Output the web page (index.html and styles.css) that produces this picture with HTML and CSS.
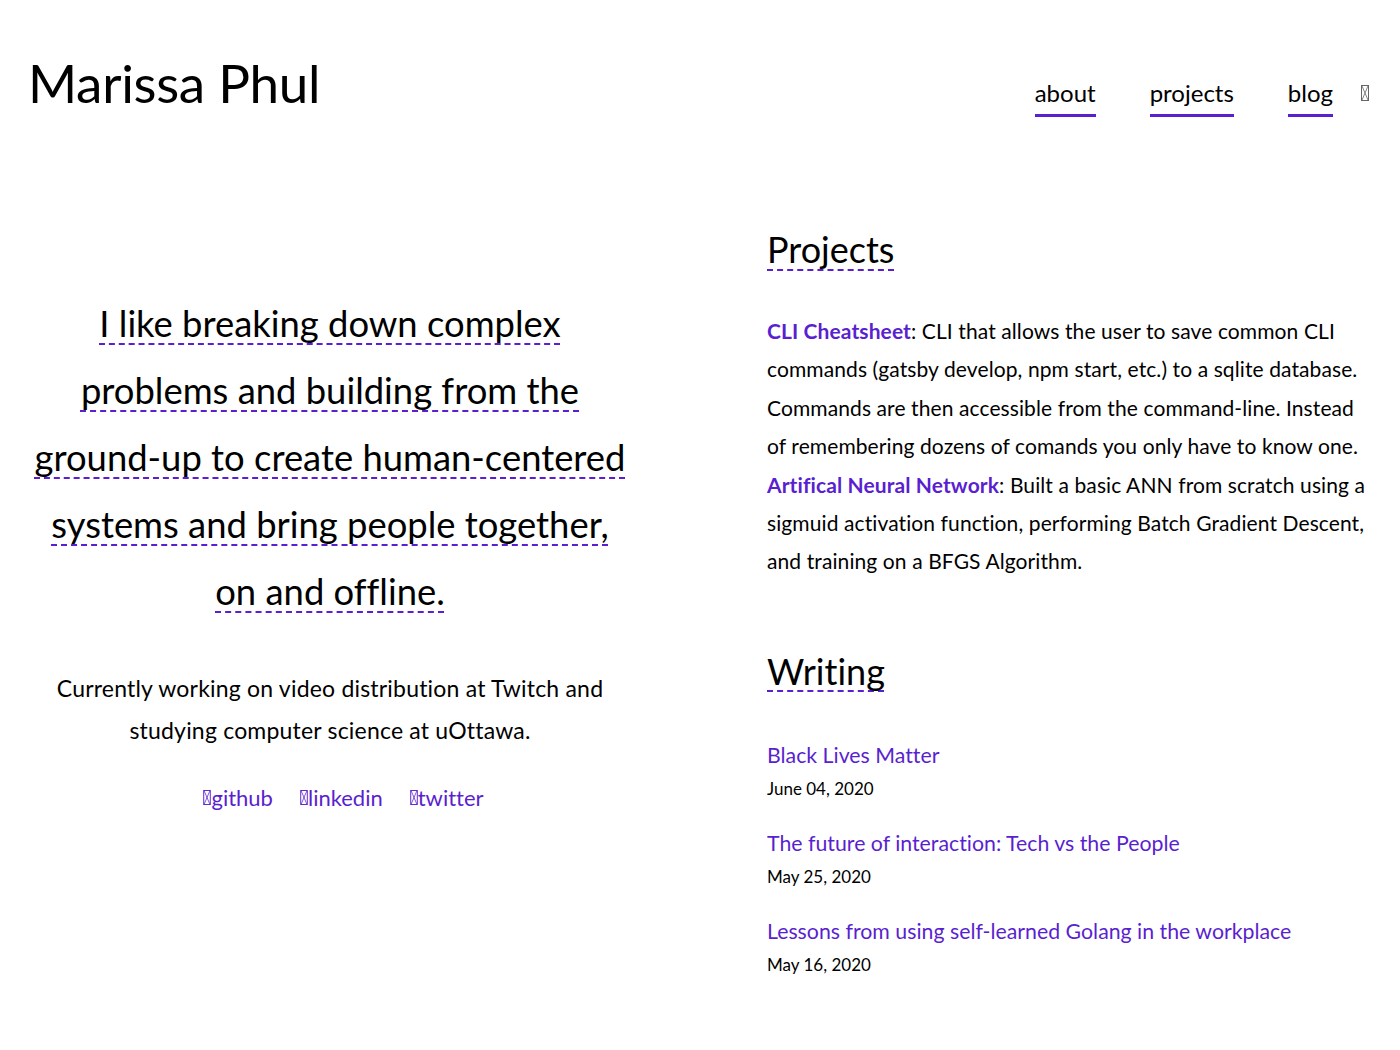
FILE: index.html
```html
<!DOCTYPE html>
<html lang="en">
<head>
<meta charset="utf-8">
<title>Marissa Phul</title>
<link rel="stylesheet" href="styles.css">
</head>
<body>
<header class="site-header">
  <h1 class="site-title">Marissa Phul</h1>
  <nav class="site-nav">
    <a class="nav-link" href="#">about</a>
    <a class="nav-link" href="#">projects</a>
    <a class="nav-link" href="#">blog</a>
    <span class="nav-icon"><svg class="tofu" viewBox="0 0 8 16" width="8" height="16"><rect x="0.5" y="0.5" width="7" height="15" fill="none" stroke="currentColor" stroke-width="1"/><path d="M1 1 L7 15 M7 1 L1 15" stroke="currentColor" stroke-width="0.8" fill="none"/></svg></span>
  </nav>
</header>
<main class="layout">
  <section class="intro">
    <p class="quote"><span class="dash">I like breaking down complex problems and building from the ground-up to create human-centered systems and bring people together, on and offline.</span></p>
    <p class="current">Currently working on video distribution at Twitch and studying computer science at uOttawa.</p>
    <div class="socials">
      <a class="social" href="#"><svg class="tofu" viewBox="0 0 8 16" width="8" height="15"><rect x="0.5" y="0.5" width="7" height="15" fill="none" stroke="currentColor" stroke-width="1"/><path d="M1 1 L7 15 M7 1 L1 15" stroke="currentColor" stroke-width="0.8" fill="none"/></svg>github</a>
      <a class="social" href="#"><svg class="tofu" viewBox="0 0 8 16" width="8" height="15"><rect x="0.5" y="0.5" width="7" height="15" fill="none" stroke="currentColor" stroke-width="1"/><path d="M1 1 L7 15 M7 1 L1 15" stroke="currentColor" stroke-width="0.8" fill="none"/></svg>linkedin</a>
      <a class="social" href="#"><svg class="tofu" viewBox="0 0 8 16" width="8" height="15"><rect x="0.5" y="0.5" width="7" height="15" fill="none" stroke="currentColor" stroke-width="1"/><path d="M1 1 L7 15 M7 1 L1 15" stroke="currentColor" stroke-width="0.8" fill="none"/></svg>twitter</a>
    </div>
  </section>
  <section class="side">
    <h2 class="section-title"><span class="dash">Projects</span></h2>
    <p class="projects">
      <a class="project-name" href="#">CLI Cheatsheet</a>: CLI that allows the user to save common CLI commands (gatsby develop, npm start, etc.) to a sqlite database. Commands are then accessible from the command-line. Instead of remembering dozens of comands you only have to know one.
      <a class="project-name" href="#">Artifical Neural Network</a>: Built a basic ANN from scratch using a sigmuid activation function, performing Batch Gradient Descent, and training on a BFGS Algorithm.
    </p>
    <h2 class="section-title writing"><span class="dash">Writing</span></h2>
    <ul class="posts">
      <li class="post"><a class="post-title" href="#">Black Lives Matter</a><div class="post-date">June 04, 2020</div></li>
      <li class="post"><a class="post-title" href="#">The future of interaction: Tech vs the People</a><div class="post-date">May 25, 2020</div></li>
      <li class="post"><a class="post-title" href="#">Lessons from using self-learned Golang in the workplace</a><div class="post-date">May 16, 2020</div></li>
    </ul>
  </section>
</main>
</body>
</html>
```

FILE: styles.css
```css
* { box-sizing: border-box; }
html, body { margin: 0; padding: 0; background: #fff; }
body {
  font-family: "Lato", "Open Sans", sans-serif;
  font-variant-ligatures: no-common-ligatures;
  color: #000;
}
a { text-decoration: none; color: #5a1fd0; }

.site-header {
  display: flex;
  justify-content: space-between;
  align-items: flex-start;
  padding: 50px 31px 0 28px;
}
.site-title {
  margin: 0;
  font-size: 53px;
  font-weight: 400;
  line-height: 66px;
  letter-spacing: -0.3px;
}
.site-nav {
  display: flex;
  align-items: flex-start;
  gap: 54px;
  padding-top: 28px;
}
.nav-link {
  color: #000;
  font-size: 24px;
  line-height: 30px;
  padding-bottom: 6px;
  border-bottom: 3px solid #5a1fd0;
}
.nav-icon { color: #666; margin-left: -26px; padding-top: 7px; }
.tofu { display: inline-block; }

.layout {
  display: grid;
  grid-template-columns: 600px 1fr;
  column-gap: 137px;
  padding: 0 30px 0 30px;
  margin-top: 110px;
}

.dash {
  text-decoration: underline dashed #5a1fd0;
  text-decoration-thickness: 2px;
  text-underline-offset: 6px;
  text-decoration-skip-ink: none;
}

.intro { text-align: center; padding-top: 63px; }
.quote {
  margin: 0;
  font-size: 36.4px;
  line-height: 67px;
}
.current {
  margin: 42px 0 0;
  font-size: 23px;
  letter-spacing: 0.2px;
  line-height: 42px;
}
.socials {
  display: flex;
  justify-content: center;
  margin-top: 33px;
  font-size: 22px;
}
.social { display: inline-flex; align-items: center; margin-left: 27px; }

.section-title {
  margin: 0;
  font-size: 36px;
  font-weight: 400;
  line-height: 44px;
}
.projects {
  margin: 41px 0 0;
  font-size: 21px;
  letter-spacing: 0.1px;
  line-height: 38.4px;
}
.project-name { font-weight: 700; }
.writing { margin-top: 68px; }
.posts { list-style: none; margin: 46px 0 0; padding: 0; }
.post { margin-bottom: 21px; }
.post-title { font-size: 21.3px; line-height: 33px; }
.post-date { font-size: 17px; line-height: 34px; }
```
